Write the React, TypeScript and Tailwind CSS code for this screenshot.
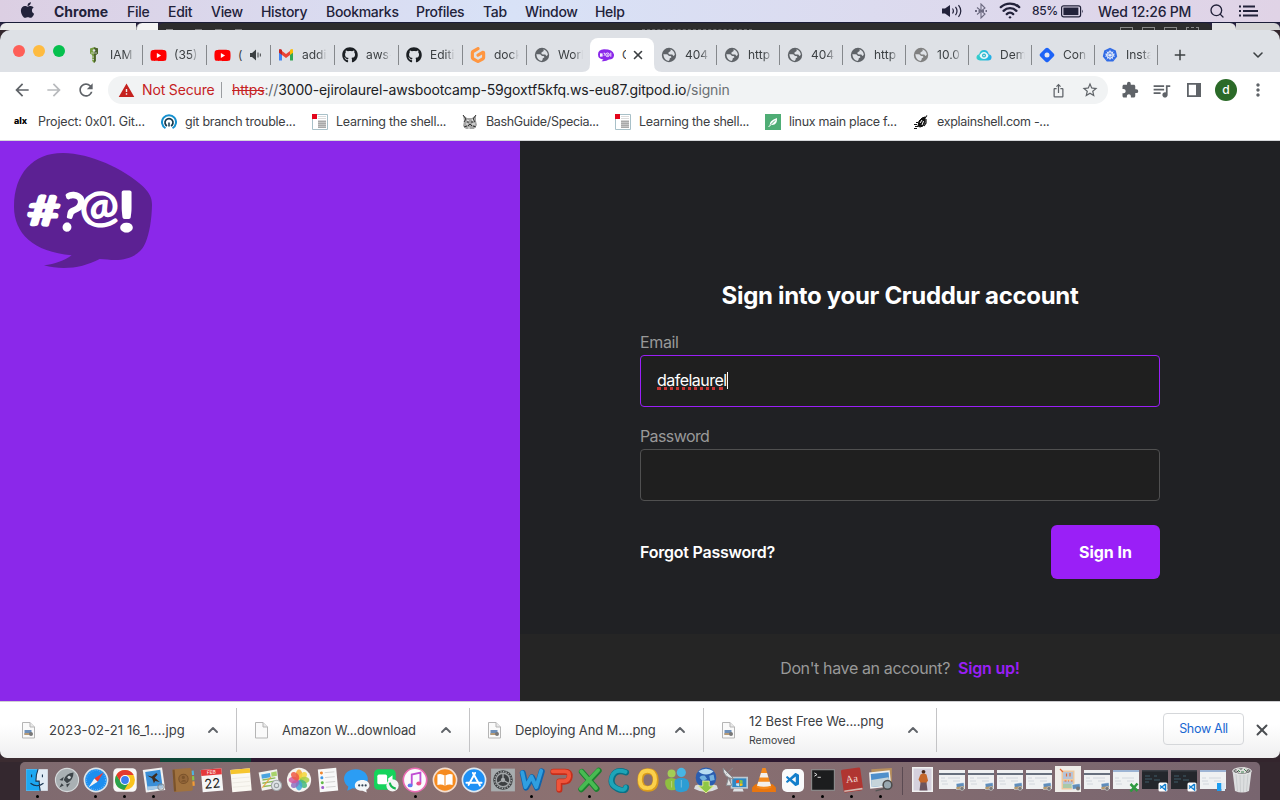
import React from 'react';
import { FaApple, FaGithub, FaYoutube } from 'react-icons/fa';
import { SiGitpod } from 'react-icons/si';
import {
  MdAdd,
  MdArrowBack,
  MdArrowForward,
  MdExtension,
  MdIosShare,
  MdMoreVert,
  MdQueueMusic,
  MdRefresh,
  MdStarBorder,
  MdWarning,
} from 'react-icons/md';
import { VscVscode } from 'react-icons/vsc';
import { ChevronDown, ChevronUp, Search, Wifi, X } from 'lucide-react';

/* ---------- macOS menu bar ---------- */

const menus = [
  { label: 'File', cls: 'w-[41px]' },
  { label: 'Edit', cls: 'w-[43px]' },
  { label: 'View', cls: 'w-[50px]' },
  { label: 'History', cls: 'w-[65px]' },
  { label: 'Bookmarks', cls: 'w-[90px]' },
  { label: 'Profiles', cls: 'w-[67px]' },
  { label: 'Tab', cls: 'w-[42px]' },
  { label: 'Window', cls: 'w-[70px]' },
  { label: 'Help', cls: 'w-[40px]' },
];

function MenuBar() {
  return (
    <div className="flex h-[23px] items-center border-b border-[#1b1d38] bg-linear-to-r from-[#dccfe3] via-[#d8e2f7] via-40% to-[#e0d3e6] text-[14px] text-[#22223a]">
      <FaApple className="ml-[20px] h-[18px] w-[15px] -translate-y-px" />
      <span className="ml-[19px] w-[73px] font-bold tracking-[0px]">Chrome</span>
      {menus.map((m) => (
        <span key={m.label} className={`${m.cls} whitespace-nowrap font-medium tracking-[-0.3px]`}>
          {m.label}
        </span>
      ))}
      <div className="ml-auto flex items-center">
        <svg width="22" height="16" viewBox="0 0 22 16" fill="none" stroke="#22223a" strokeWidth="1.2">
          <path d="M1 5.500h3L9 2v12l-5-3.500H1z" fill="#22223a" stroke="none" />
          <path d="M11.500 5.500q1.800 2.500 0 5M14.500 3.800q3 4.200 0 8.400M17.500 2.200q4.600 5.800 0 11.600" />
        </svg>
        <span className="ml-[12px] flex w-[12px] justify-center opacity-60">
          <svg width="12" height="16" viewBox="0 0 12 16" fill="none" stroke="#22223a" strokeWidth="1.100">
            <path d="M2 4.500l8 6.500L6 15V1l4 4-8 6.500" />
            <path d="M0 8h12" strokeWidth="2" strokeDasharray="2 1.500" />
          </svg>
        </span>
        <Wifi className="ml-[12px] h-[22px] w-[22px] -translate-y-px" strokeWidth={2.6} />
        <span className="ml-[11px] w-[29px] text-[12px] font-medium tracking-[-0.3px]">85%</span>
        <svg width="23" height="13" viewBox="0 0 23 13">
          <rect x=".6" y=".8" width="19" height="11" rx="2" fill="none" stroke="#22223a" strokeWidth="1.200" />
          <rect x="2.400" y="2.500" width="15" height="7.600" fill="#22223a" />
          <path d="M21.200 4.500q1.600 1.800 0 3.700z" fill="#22223a" />
        </svg>
        <span className="ml-[14px] w-[94px] whitespace-nowrap font-medium tracking-[-0.2px]">Wed 12:26 PM</span>
        <Search className="ml-[17px] h-[16px] w-[16px]" strokeWidth={2} />
        <svg className="mr-[22px] ml-[14px]" width="19" height="12" viewBox="0 0 19 12" fill="#22223a">
          <path d="M0 .5h2v2H0zM4 .5h12v2H4zM0 5h2v2H0zM4 5h15v2H4zM0 9.500h2v2H0zM4 9.500h15v2H4z" />
        </svg>
      </div>
    </div>
  );
}

function BackgroundWindows() {
  return (
    <div className="flex h-[7px] overflow-hidden bg-[#2b2440]">
      <div className="w-[136px] rounded-tl-md bg-[#e9e9e9]" />
      <div className="w-[22px] rounded-tl-md border-l border-[#aaa] bg-[#f4f4f4]" />
      <div className="flex flex-1 items-end rounded-t-md bg-[#2d2d2d]">
        <div className="ml-[8px] h-px w-[7px] bg-[#888]" />
        <div className="ml-[22px] h-px w-[7px] bg-[#777]" />
        <div className="ml-[13px] h-px w-[7px] bg-[#777]" />
        <div className="ml-[13px] h-px w-[7px] bg-[#777]" />
        <div className="ml-[400px] h-px w-[110px] border-b border-dashed border-[#666]" />
        <div className="mr-[13px] ml-auto flex gap-[9px]">
          <span className="h-[3px] w-[13px] border border-b-0 border-[#888]" />
          <span className="h-[3px] w-[13px] border border-b-0 border-[#888]" />
          <span className="h-[3px] w-[13px] border border-b-0 border-[#888]" />
          <span className="h-[3px] w-[13px] border border-b-0 border-dashed border-[#888]" />
        </div>
      </div>
      <div className="w-[24px] rounded-tr-md bg-[#e4e4e4]" />
      <div className="w-[44px] rounded-tr-md bg-[#d5d5d5]" />
    </div>
  );
}

/* ---------- browser tabs ---------- */

const Globe = ({ fill = '#5f6368' }: { fill?: string }) => (
  <svg width="16" height="16" viewBox="0 0 16 16">
    <circle cx="8" cy="8" r="7.200" fill={fill} />
    <path
      d="M2.300 7.300H5.500q2 0 2.300 1.700H9.500q1 .2.800 1.500l-1.500.7q0 2-1.300 2.800Q3 13.300 2.300 7.300z"
      fill="#dee1e6"
    />
    <path d="M9.500 2.300Q13.600 3.700 13.800 8l-1.500 1-1-1.500H8.500L7 6l1.500-1.300 1.200-.7z" fill="#dee1e6" />
  </svg>
);

const YouTube = () => (
  <span className="flex h-4 w-4 items-center justify-center bg-radial from-white from-30% to-transparent to-31%">
    <FaYoutube className="h-[17px] w-[17px] shrink-0 text-[#f00]" />
  </span>
);

const IamKey = () => (
  <svg width="16" height="16" viewBox="0 0 16 16">
    <path d="M4 1.500L8 .3l4 1.200v5L9.800 8v6L8 16l-1.800-2V8L4 6.500z" fill="#759c3e" />
    <path d="M8 .3l4 1.200v5L9.800 8v6L8 16z" fill="#4b612c" />
    <circle cx="8" cy="3.500" r="1.300" fill="#dee1e6" />
    <path d="M5 6h6M6.200 10H8M6.200 12.500H8" stroke="#dee1e6" strokeWidth=".7" />
  </svg>
);

const Gmail = () => (
  <svg width="16" height="16" viewBox="0 0 16 16">
    <path d="M1 3.500v10h3V7z" fill="#4285f4" />
    <path d="M15 3.500v10h-3V7z" fill="#34a853" />
    <path d="M4 4v4l4 3 4-3V4L8 7z" fill="#ea4335" />
    <path d="M1 3.500q0-2.200 2.400-.9L4 3v5L1 5.700z" fill="#c5221f" />
    <path d="M15 3.500q0-2.200-2.400-.9L12 3v5l3-2.300z" fill="#fbbc04" />
  </svg>
);

const Bubble = () => (
  <svg width="16" height="16" viewBox="0 0 16 16">
    <path d="M0 7.500Q0 2.500 6 2.200q9 0 10 5.300 .3 5-5 5Q8 14.800 3.500 14.200l2-1.700Q0 12 0 7.500z" fill="#8b28ea" />
    <path d="M2 7.300h2.500M2 8.700h2.500M2.700 6.200v3.600M3.900 6.200v3.600M5.600 6.200q2-.5 1.200 1.400L6 8.700M12.800 5.700v4" stroke="#fff" strokeWidth=".9" fill="none" />
    <circle cx="9.500" cy="7.800" r="1.800" fill="none" stroke="#fff" strokeWidth=".9" />
    <circle cx="9.700" cy="8" r=".7" fill="#fff" />
  </svg>
);

const CloudDemo = () => (
  <svg width="16" height="16" viewBox="0 0 16 16">
    <defs>
      <linearGradient id="teal">
        <stop stopColor="#35cfc9" />
        <stop offset="1" stopColor="#22aee8" />
      </linearGradient>
    </defs>
    <path d="M4 13.500Q0 13 .5 9.800 1 7.500 3.200 7.300 4 3 8 3t4.800 4.300Q16 8 15.500 11q-.5 2.500-3.500 2.500z" fill="url(#teal)" />
    <path d="M3.500 8.800Q5 5 8 5t4.500 3.800Q11 12 8 12T3.500 8.800z" fill="#e8f7fa" />
    <circle cx="8" cy="8.600" r="2" fill="#29b5c8" />
    <circle cx="8" cy="8.600" r=".8" fill="#e8f7fa" />
  </svg>
);

const Diamond = () => (
  <svg width="16" height="16" viewBox="0 0 16 16">
    <rect x="2.300" y="2.300" width="11.400" height="11.400" rx="2" fill="#1d63f7" transform="rotate(45 8 8)" />
    <circle cx="8" cy="8" r="2.500" fill="#e4e8f2" />
  </svg>
);

const Kube = () => (
  <svg width="16" height="16" viewBox="0 0 16 16">
    <path d="M8 .8l5.800 2.700 1.400 6.100-4 5H4.800l-4-5 1.400-6.100z" fill="#326ce5" />
    <circle cx="8" cy="8" r="3.300" fill="none" stroke="#fff" />
    <path d="M8 2.800V13M3 7l10 2.300M3 9.300L13 7M4.800 4.300l6.400 8M11.200 4.300l-6.400 8" stroke="#fff" strokeWidth=".6" />
  </svg>
);

type TabInfo = { title: string; icon: React.ReactNode; audio?: boolean };

const leftTabs: TabInfo[] = [
  { title: 'IAM', icon: <IamKey /> },
  { title: '(35)', icon: <YouTube /> },
  { title: '(', icon: <YouTube />, audio: true },
  { title: 'addi', icon: <Gmail /> },
  { title: 'aws-', icon: <FaGithub className="h-4 w-4 text-[#1b1f23]" /> },
  { title: 'Editi', icon: <FaGithub className="h-4 w-4 text-[#1b1f23]" /> },
  { title: 'dock', icon: <SiGitpod className="h-4 w-4 text-[#ff9640]" /> },
  { title: 'Worl', icon: <Globe /> },
];

const rightTabs: TabInfo[] = [
  { title: '404', icon: <Globe /> },
  { title: 'http', icon: <Globe /> },
  { title: '404', icon: <Globe /> },
  { title: 'http', icon: <Globe /> },
  { title: '10.0', icon: <Globe fill="#808080" /> },
  { title: 'Dem', icon: <CloudDemo /> },
  { title: 'Con', icon: <Diamond /> },
  { title: 'Insta', icon: <Kube /> },
];

function Tab({ tab, width, last }: { tab: TabInfo; width: string; last?: boolean }) {
  return (
    <div className={`${width} flex shrink-0 items-center pl-[7px]`}>
      <span className="flex w-4 shrink-0 justify-center">{tab.icon}</span>
      <span
        className={`${tab.audio ? 'w-[8px]' : 'w-[25px] mask-r-from-62% mask-r-to-100%'} ml-2 shrink-0 overflow-hidden text-[12px] whitespace-nowrap text-[#3c4043]`}
      >
        {tab.title}
      </span>
      {tab.audio && (
        <svg className="ml-[4px] shrink-0" width="12" height="12" viewBox="0 0 12 12">
          <path d="M0 4h2l4-3.500v11L2 8H0z" fill="#3c4043" />
          <path d="M8 3.500v5M10.300 4.500v3" stroke="#3c4043" strokeWidth="1" />
        </svg>
      )}
      {!last && <span className="ml-auto h-[20px] w-px shrink-0 bg-[#85888c]" />}
    </div>
  );
}

function TabStrip() {
  return (
    <div className="flex h-[42px] rounded-t-[10px] bg-[#dee1e6]">
      <div className="flex w-[79px] shrink-0 gap-2 pt-[15px] pl-[13px]">
        <span className="h-3 w-3 rounded-full bg-[#fe5f58]" />
        <span className="h-3 w-3 rounded-full bg-[#febb40]" />
        <span className="h-3 w-3 rounded-full bg-[#05c04e]" />
      </div>
      <div className="mt-2 flex h-[34px] w-[511px] shrink-0">
        {leftTabs.map((t, i) => (
          <Tab key={i} tab={t} width="w-[64px]" last={i === 7} />
        ))}
      </div>
      <div className="relative mt-2 flex h-[34px] w-16 shrink-0 items-center rounded-t-lg bg-white pl-2">
        <svg className="absolute bottom-0 -left-2" width="8" height="8">
          <path d="M8 0v8H0q8 0 8-8z" fill="#fff" />
        </svg>
        <svg className="absolute -right-2 bottom-0" width="8" height="8">
          <path d="M0 0v8h8Q0 8 0 0z" fill="#fff" />
        </svg>
        <Bubble />
        <span className="ml-2 w-[4px] overflow-hidden text-[12px] text-[#3c4043]">C</span>
        <X className="ml-[5px] h-[14px] w-[14px] text-[#3c4043]" strokeWidth={2.8} />
      </div>
      <div className="mt-2 flex h-[34px] w-[504px] shrink-0">
        {rightTabs.map((t, i) => (
          <Tab key={i} tab={t} width="w-[63px]" />
        ))}
      </div>
      <div className="mt-2 flex h-[34px] flex-1 items-center justify-between pr-[14px] pl-[13px] text-[#3c4043]">
        <MdAdd className="h-[18px] w-[18px]" />
        <ChevronDown className="h-4 w-4" strokeWidth={2.4} />
      </div>
    </div>
  );
}

/* ---------- toolbar ---------- */

function Toolbar() {
  return (
    <div className="flex h-9 items-center bg-white text-[#5f6368]">
      <MdArrowBack className="ml-3 h-5 w-5" />
      <MdArrowForward className="ml-3 h-5 w-5 text-[#b8babd]" />
      <MdRefresh className="ml-3 h-5 w-5" />
      <div className="ml-3 flex h-7 w-[1000px] items-center rounded-full bg-[#f1f3f4] text-[14px] whitespace-nowrap">
        <MdWarning className="ml-[10px] h-[17px] w-[17px] text-[#c5221f]" />
        <span className="ml-[7px] w-[79px] -translate-y-px tracking-[-0.15px] text-[#c5221f]">Not Secure</span>
        <span className="h-4 w-px bg-[#9a9da1]" />
        <span className="ml-[10px] -translate-y-px tracking-[-0.13px] text-[#202124]">
          <span className="text-[#c5221f] line-through">https</span>
          <span className="text-[#5f6368]">://</span>3000-ejirolaurel-awsbootcamp-59goxtf5kfq.ws-eu87.gitpod.io
          <span className="text-[#6b6f73]">/signin</span>
        </span>
        <MdIosShare className="ml-auto h-[15px] w-[15px]" />
        <MdStarBorder className="mr-[9px] ml-[15px] h-[18px] w-[18px]" />
      </div>
      <MdExtension className="ml-[13px] h-[18px] w-[18px]" />
      <MdQueueMusic className="ml-[12px] h-[21px] w-[21px]" />
      <svg className="ml-[15px]" width="14" height="14" viewBox="0 0 14 14">
        <path d="M0 0h14v14H0zM1.800 1.800v10.400H9V1.800z" fill="#5f6368" fillRule="evenodd" />
      </svg>
      <span className="ml-[14px] flex h-[22px] w-[22px] items-center justify-center rounded-full bg-[#2b6a28] text-[12px] font-medium text-white">
        d
      </span>
      <MdMoreVert className="ml-[11px] h-5 w-5" />
    </div>
  );
}

const DocIcon = () => (
  <svg width="16" height="16" viewBox="0 0 16 16">
    <path d="M.5.500h15v15H.5z" fill="#fff" stroke="#a8c0c8" />
    <path d="M0 0h5v5H0z" fill="#e3061b" />
    <path d="M6 2.500h8M6 4.500h8" stroke="#ccc" strokeWidth=".7" />
    <path d="M6 6.500h8v7.500H6z" fill="#a9a9a9" />
    <path d="M6 8.500h8M6 10.500h8M6 12.500h8" stroke="#d8d8d8" strokeWidth=".6" />
  </svg>
);

const bookmarks: { label: string; icon: React.ReactNode; width: string }[] = [
  {
    label: 'Project: 0x01. Git...',
    width: 'w-[107px] tracking-[-0.18px]',
    icon: <span className="-mt-[2px] w-4 text-[9px] font-extrabold tracking-[0px] text-black">alx</span>,
  },
  {
    label: 'git branch trouble...',
    width: 'w-[111px] tracking-[-0.23px]',
    icon: (
      <svg width="16" height="16" viewBox="0 0 16 16" fill="none">
        <path d="M4.500 14.200A7 7 0 1 1 11.500 14.200" stroke="#1590cf" strokeWidth="2" />
        <path d="M6 12A4 4 0 1 1 10 12" stroke="#173a4d" strokeWidth="1.700" />
        <path d="M8 8.500v4" stroke="#173a4d" strokeWidth="1.500" />
      </svg>
    ),
  },
  { label: 'Learning the shell...', width: 'w-[110px] tracking-[-0.27px]', icon: <DocIcon /> },
  {
    label: 'BashGuide/Specia...',
    width: 'w-[113px] tracking-[-0.34px]',
    icon: (
      <svg width="16" height="16" viewBox="0 0 16 16">
        <path d="M1 1l4 3h5l4-3v6l1 4-3 4H4L1 12l1-5z" fill="#a4a4a4" />
        <path d="M1 1l3 4-2 3M14 1l-3 4 2 3M5 8h2M9 8h2M6 12l2-2 2 2M2 13l3-1M14 13l-3-1" stroke="#333" fill="none" />
        <path d="M5 6l2 1M10 5l1 2M4 10h2M10 10h3M7 13v2" stroke="#f2f2f2" />
      </svg>
    ),
  },
  { label: 'Learning the shell...', width: 'w-[110px] tracking-[-0.27px]', icon: <DocIcon /> },
  {
    label: 'linux main place f...',
    width: 'w-[108px] tracking-[-0.27px]',
    icon: (
      <svg width="16" height="16" viewBox="0 0 16 16">
        <path d="M0 0h16v16H0z" fill="#4fad75" />
        <path d="M4.500 12Q4 6.500 12 4q.5 7.500-5.500 7z" fill="#fff" />
        <path d="M3.500 13L10 6.500" stroke="#4fad75" />
        <path d="M3.500 13L6 10.500" stroke="#fff" />
      </svg>
    ),
  },
  {
    label: 'explainshell.com -...',
    width: 'w-[113px] tracking-[-0.3px]',
    icon: (
      <svg width="16" height="16" viewBox="0 0 16 16" fill="none" stroke="#111">
        <path d="M1 14.500h3M2 12.500h3M1 10.500h3M3 8.500h2" strokeWidth="1.200" />
        <path d="M5 12l1-5 3-3 3-1v5l-2 4-3 1z" fill="#111" />
        <path d="M12 4l2-2.500M11 12l2-3V5" strokeWidth="1.200" />
        <path d="M7 9l2-3M9 11l1.500-4" stroke="#fff" />
      </svg>
    ),
  },
];

function BookmarkBar() {
  return (
    <div className="flex h-[33px] items-center gap-4 border-b border-[#d5d7da] bg-white pb-[4px] pl-[14px]">
      {bookmarks.map((b, i) => (
        <div key={i} className="flex shrink-0 items-center gap-2">
          {b.icon}
          <span className={`${b.width} text-[12.5px] whitespace-nowrap text-[#3c4043]`}>{b.label}</span>
        </div>
      ))}
    </div>
  );
}

/* ---------- sign-in page ---------- */

function Logo() {
  return (
    <svg width="200" height="139" viewBox="0 3 600 417">
      <path
        d="M42 200C42 100 100 38 190 39C270 40 370 85 430 140C450 160 456 175 456 195C455 240 448 280 437 307C422 345 385 360 345 360C330 360 315 358 299 357C250 383 190 392 132 376C165 373 192 362 215 346C100 335 42 280 42 200Z"
        fill="#5c2193"
      />
      <g fill="#fff" stroke="#fff" strokeLinejoin="round" fontFamily="Lato, sans-serif" fontWeight="400">
        <text x="83" y="255" fontSize="122" strokeWidth="9" textLength="96" lengthAdjust="spacingAndGlyphs" transform="rotate(2 130 210)">#</text>
        <text x="183" y="271" fontSize="156" strokeWidth="8" textLength="66" lengthAdjust="spacingAndGlyphs" transform="rotate(14 212 215)">?</text>
        <text x="240" y="245" fontSize="130" strokeWidth="5" textLength="118" lengthAdjust="spacingAndGlyphs" transform="rotate(-10 300 210)">@</text>
        <text x="352" y="272" fontSize="162" strokeWidth="9" textLength="56" lengthAdjust="spacingAndGlyphs">!</text>
      </g>
    </svg>
  );
}

function SignIn() {
  return (
    <div className="flex h-[560px]">
      <div className="w-[520px] bg-[#8b28ea]">
        <Logo />
      </div>
      <div className="flex flex-1 flex-col bg-[#202124] text-[16px]">
        <form className="flex h-[493px] flex-col px-[120px] pt-[137px]">
          <h1 className="mb-[20px] text-center text-[24px] leading-[36px] font-bold tracking-[-0.31px] text-white">
            Sign into your Cruddur account
          </h1>
          <label className="h-[21px] leading-[17px] tracking-[-0.35px] text-[#999]">Email</label>
          <div className="flex h-[52px] items-center rounded-[4px] border border-[#9a1ff7] bg-[#1f1f1f] pb-px pl-4 text-white">
            <span className="relative h-[17px] border-r border-white leading-[17px] tracking-[-0.53px]">
              dafelaurel
              <span className="absolute right-1 -bottom-px left-0 border-b-[3px] border-dotted border-[#c93434]" />
            </span>
          </div>
          <label className="mt-[21px] h-[21px] leading-[17px] tracking-[-0.6px] text-[#999]">Password</label>
          <div className="h-[52px] rounded-[4px] border border-[#505050] bg-[#1f1f1f]" />
          <div className="mt-[24px] flex items-center justify-between font-semibold text-white">
            <a className="tracking-[-0.22px]">Forgot Password?</a>
            <button type="button" className="h-[54px] w-[109px] rounded-md bg-[#9a1ff7] pb-px font-bold tracking-[0px]">
              Sign In
            </button>
          </div>
        </form>
        <div className="flex flex-1 items-center justify-center gap-2 bg-[#252525] text-[#999]">
          <span className="tracking-[-0.37px]">Don't have an account?</span>
          <a className="font-semibold tracking-[-0.2px] text-[#9a1ff7]">Sign up!</a>
        </div>
      </div>
    </div>
  );
}

/* ---------- downloads ---------- */

const FileIcon = ({ image }: { image?: boolean }) => (
  <svg width="13" height="17" viewBox="0 0 13 17">
    <path d="M.5.500h7.500l4.500 4.500v11H.5z" fill="#fafafa" stroke="#b5b5b5" />
    <path d="M8 .5V5h4.500" fill="#e9e9e9" stroke="#b5b5b5" />
    {image && (
      <>
        <path d="M2.500 8h7v5h-7z" fill="#6d8fb8" />
        <path d="M2.500 11h7v2h-7z" fill="#b59a76" />
        <circle cx="9" cy="12" r="2" fill="#777" />
      </>
    )}
  </svg>
);

const downloads = [
  { name: '2023-02-21 16_1....jpg', image: true, note: '', pad: 'pl-[22px]', width: 'w-[237px]', track: 'tracking-[0.12px]' },
  { name: 'Amazon W...download', image: false, note: '', pad: 'pl-[18px]', width: 'w-[233px]', track: 'tracking-[-0.15px]' },
  { name: 'Deploying And M....png', image: true, note: '', pad: 'pl-[18px]', width: 'w-[234px]', track: 'tracking-[-0.15px]' },
  { name: '12 Best Free We....png', image: true, note: 'Removed', pad: 'pl-[18px]', width: 'w-[233px]', track: 'tracking-[-0.1px]' },
];

function DownloadBar() {
  return (
    <div className="flex h-[57px] items-center rounded-b-[7px] border-t border-[#cfcfd2] bg-linear-to-b from-white via-white via-40% to-[#efeff0] text-[#3c4043]">
      {downloads.map((d) => (
        <div key={d.name} className={`${d.width} ${d.pad} flex h-[44px] shrink-0 items-center border-r border-[#c4c4c6] pr-[15px]`}>
          <FileIcon image={d.image} />
          <div className="ml-[14px] flex flex-col whitespace-nowrap">
            <span className={`${d.track} text-[13px] leading-[18px]`}>{d.name}</span>
            {d.note && <span className="mt-[3px] text-[10.5px] leading-[16px]">{d.note}</span>}
          </div>
          <ChevronUp className="ml-auto h-[16px] w-[16px] text-[#5f6368]" strokeWidth={2.8} />
        </div>
      ))}
      <button className="mr-[9px] ml-auto h-8 w-[81px] -translate-y-px rounded-[4px] border border-[#d5d7da] text-[12.5px] tracking-[-0.3px] text-[#1967d2]">
        Show All
      </button>
      <X className="mr-[9px] h-[18px] w-[18px] text-[#4a4d51]" strokeWidth={2.6} />
    </div>
  );
}

/* ---------- dock ---------- */

const Cell = ({ children }: { children: React.ReactNode }) => (
  <svg width="26" height="26" viewBox="0 0 24 24">
    {children}
  </svg>
);

const BarLetter = ({ d, light, dark }: { d: string; light: string; dark: string }) => (
  <Cell>
    <path d={d} fill="none" stroke={dark} strokeWidth="5.600" strokeLinecap="round" strokeLinejoin="round" />
    <path d={d} fill="none" stroke={light} strokeWidth="3.600" strokeLinecap="round" strokeLinejoin="round" transform="translate(-.5 -.5)" />
  </Cell>
);

const WindowThumb = ({ dark, badge }: { dark?: boolean; badge: 'preview' | 'code' | 'excel' | 'finder' }) => (
  <svg width="28" height="24" viewBox="0 0 28 24">
    <path d="M1 2h26v19H1z" fill={dark ? '#24272c' : '#eff1f2'} />
    {dark ? (
      <path d="M1 2h26v1.500H1z" fill="#3b3e45" />
    ) : (
      <path d={badge === 'preview' ? 'M1 5h26v2H1z' : 'M1 2h26v2H1z'} fill={badge === 'preview' ? '#666f7d' : '#9db4d4'} />
    )}
    {dark ? (
      <path d="M4 8h5M4 11h7M4 14h4M13 8h3M13 12h6" stroke="#3f5c68" />
    ) : (
      <path d="M3 10h4M10 10h12M3 13h6M15 13h7M4 16h6" stroke="#ccd2d8" strokeWidth=".8" />
    )}
    {badge === 'preview' && (
      <>
        <path d="M18 15.500l8-1 .5 6-8 1z" fill="#5f8dbb" stroke="#fff" strokeWidth=".6" />
        <path d="M18.500 19l7.500-1v2.500l-7.500 1z" fill="#b89a6b" />
        <circle cx="24" cy="20.500" r="2" fill="#777" stroke="#ccc" strokeWidth=".6" />
      </>
    )}
    {badge === 'code' && (
      <>
        <rect x="17.500" y="14.500" width="9" height="9" rx="1.500" fill="#fff" />
        <path d="M24.500 16v6l-5.500-4.500M24.500 16L19 20.500" stroke="#1480d0" strokeWidth="1.500" fill="none" />
      </>
    )}
    {badge === 'excel' && <path d="M18.500 16l7 7M25.500 15.500l-7 8" stroke="#2e9a40" strokeWidth="2.500" />}
    {badge === 'finder' && (
      <>
        <path d="M18 15h4.500v8H18z" fill="#1c9df0" />
        <path d="M22.500 15H26v8h-3.500z" fill="#dcebf7" />
      </>
    )}
  </svg>
);

const petals = ['#f7a531', '#f3d53b', '#a8cf45', '#45b97c', '#3fa7d6', '#8f6fc1', '#d1579b', '#ee5a45'];

const apps: { icon: React.ReactNode; open?: boolean }[] = [
  {
    open: true,
    icon: (
      <Cell>
        <path d="M2 2h20v20H2z" fill="#e2ecf5" />
        <path d="M2 2h11q-2 5-2 11h3q0 5 1 9H2z" fill="#1ca8f2" />
        <path d="M7 7v2.500M17 7v2.500M6 15q6 4.500 12 0M13 2q-2 5-2 11h3q0 5 1 9" stroke="#17334f" fill="none" />
      </Cell>
    ),
  },
  {
    icon: (
      <Cell>
        <circle cx="12" cy="12" r="10.700" fill="#a9b0b3" stroke="#d8dcde" />
        <path d="M18 5q-7 .5-9 7l3 3q6-3 6-10zM9 9l-4 3 3 .7zM15 15l-3 4-.7-3zM7 15l-2 4 4-2z" fill="#3d4448" />
        <circle cx="14" cy="9.500" r="1.500" fill="#c7cdd0" />
      </Cell>
    ),
  },
  {
    open: true,
    icon: (
      <Cell>
        <circle cx="12" cy="12" r="10.700" fill="#1c8ff0" stroke="#dfe6ea" strokeWidth="1.500" />
        <circle cx="12" cy="12" r="8.800" fill="none" stroke="#79bdf5" strokeDasharray=".6 1.400" />
        <path d="M19 5l-5.500 8.500-3-3z" fill="#f23b30" />
        <path d="M5 19l5.500-8.500 3 3z" fill="#f4f4f4" />
      </Cell>
    ),
  },
  {
    open: true,
    icon: (
      <Cell>
        <rect x="1.200" y="1.200" width="21.600" height="21.600" rx="4" fill="#f8f8f8" />
        <circle cx="12" cy="12" r="9.200" fill="#f9c31d" />
        <path d="M4 7.400A9.200 9.200 0 0 1 20 7.400H12z" fill="#e33b2e" />
        <path d="M4 7.400A9.200 9.200 0 0 0 11.300 21.200L15.700 14H8.300z" fill="#2aa24c" />
        <path d="M4 7.400L8.300 14 12 7.400z" fill="#e33b2e" />
        <circle cx="12" cy="12" r="4.600" fill="#fff" />
        <circle cx="12" cy="12" r="3.600" fill="#3d7ef0" />
      </Cell>
    ),
  },
  {
    open: true,
    icon: (
      <Cell>
        <g transform="rotate(-8 12 12)">
          <path d="M3 1.500h18v21H3z" fill="#f1f1f1" />
          <path d="M5 3.500h14v17H5z" fill="#3a8fd8" />
          <path d="M6.500 7l4 1.500L15 6l1 1.500-3 2.500 4 4.500-4-1.500-1.500 2-1-4.500z" fill="#3d2b1e" />
          <path d="M5 17l14 1v2.500H5z" fill="#a5c9e6" />
        </g>
        <circle cx="18.500" cy="18.500" r="3" fill="#b9c2c8" fillOpacity=".4" stroke="#777" strokeWidth=".7" />
      </Cell>
    ),
  },
  {
    icon: (
      <Cell>
        <g transform="rotate(-4 12 12)">
          <path d="M20 4h2.500v4H20z" fill="#4fb4e2" />
          <path d="M20 9h2.500v4H20z" fill="#8ac54b" />
          <path d="M20 14h2.500v4H20z" fill="#f29c38" />
          <rect x="3" y="1.500" width="17.500" height="21" rx="1.500" fill="#a0723f" />
          <path d="M3 2h2v20H3z" fill="#7b532b" />
          <circle cx="12.500" cy="11" r="4.300" fill="#94673a" stroke="#7b532b" />
          <circle cx="12.500" cy="9.600" r="1.500" fill="#7b532b" />
          <path d="M9.800 13.500q2.700-3 5.400 0" fill="#7b532b" />
        </g>
      </Cell>
    ),
  },
  {
    icon: (
      <Cell>
        <g transform="rotate(-5 12 12)">
          <path d="M2.500 2h19v20.500h-19z" fill="#f6f6f6" />
          <path d="M2.500 2h19v5.500h-19z" fill="#e5383b" />
          <text x="12" y="6.400" fontSize="4.500" fill="#fff" textAnchor="middle" fontFamily="Inter, sans-serif">FEB</text>
          <text x="12" y="19.500" fontSize="12" fill="#222" textAnchor="middle" fontFamily="Inter, sans-serif">22</text>
        </g>
      </Cell>
    ),
  },
  {
    icon: (
      <Cell>
        <g transform="rotate(-5 12 12)">
          <path d="M3 2h18v20.500H3z" fill="#faf8f2" />
          <path d="M3 2h18v4H3z" fill="#f6c52d" />
          <path d="M4 10h16M4 14h16M4 18h16" stroke="#dedad0" strokeWidth=".4" />
        </g>
      </Cell>
    ),
  },
  {
    icon: (
      <Cell>
        <path d="M1.500 5l17-3 2 17-16 3z" fill="#f1f1ee" />
        <path d="M4 7l8-1.500.5 4-8 1.300z" fill="#4aa3df" />
        <path d="M5 12l12-2M5 15l11-2M6 18l8-1" stroke="#8bb95a" strokeWidth="1.300" />
        <path d="M13 5l5-1 .5 4-5 1z" fill="#a8d36b" />
        <path d="M5 19l8-10" stroke="#eaa53a" />
        <circle cx="18" cy="17" r="4.700" fill="#dfe3e6" stroke="#a1a6aa" />
        <circle cx="18" cy="17" r="2" fill="none" stroke="#9aa0a4" />
      </Cell>
    ),
  },
  {
    icon: (
      <Cell>
        <circle cx="12" cy="12" r="11.200" fill="#f5f3f0" />
        {petals.map((c, i) => (
          <ellipse key={c} cx="12" cy="7" rx="3" ry="4.600" fill={c} fillOpacity=".85" transform={`rotate(${i * 45} 12 12)`} />
        ))}
      </Cell>
    ),
  },
  {
    icon: (
      <Cell>
        <g transform="rotate(-5 12 12)">
          <path d="M3.500 1.500h17v21h-17z" fill="#f8f8f8" />
          <path d="M9.500 5h9M9.500 9.500h9M9.500 14h9M9.500 18.500h9" stroke="#c8c8c8" strokeWidth=".7" />
          <circle cx="6.500" cy="5" r="1.400" fill="#f0872f" />
          <circle cx="6.500" cy="9.500" r="1.400" fill="#3e98e8" />
          <circle cx="6.500" cy="14" r="1.400" fill="#62b946" />
          <circle cx="6.500" cy="18.500" r="1.400" fill="#a060c8" />
        </g>
      </Cell>
    ),
  },
  {
    icon: (
      <Cell>
        <path d="M11 2C4 2 0 6 0 11c0 3 2 5.500 4 7l-1 4 5-2.500C17 21 22 16 22 11S17 2 11 2z" fill="#2b9df4" />
        <path d="M17 12c-4 0-7 2-7 5s3 5 7 5l4 1.500-.5-2.500c2-1 3-2.500 3-4 0-3-3-5-6.500-5z" fill="#f4f6f8" />
        <circle cx="14" cy="17" r="1" fill="#345" />
        <circle cx="17" cy="17" r="1" fill="#345" />
        <circle cx="20" cy="17" r="1" fill="#345" />
      </Cell>
    ),
  },
  {
    icon: (
      <Cell>
        <rect x="1" y="2" width="20" height="19" rx="4" fill="#14d45b" />
        <rect x="4" y="7" width="9" height="9" rx="1.500" fill="#fff" />
        <path d="M14 10.500l4-3v8l-4-3z" fill="#fff" />
        <circle cx="18" cy="17" r="5.700" fill="#f3f5f4" />
        <path d="M15.500 14.500q.5 4.500 5.500 5.500" stroke="#16b84f" strokeWidth="2" fill="none" />
      </Cell>
    ),
  },
  {
    open: true,
    icon: (
      <Cell>
        <circle cx="12" cy="12" r="10.800" fill="#fbfbfd" stroke="#eb6bb4" strokeWidth="1.500" />
        <path d="M9 16.500V7l8-1.800v9.500" stroke="#c04fd4" strokeWidth="1.700" fill="none" />
        <ellipse cx="7.500" cy="17" rx="2.300" ry="1.800" fill="#607cf0" />
        <ellipse cx="15.500" cy="15.200" rx="2.300" ry="1.800" fill="#e8518d" />
      </Cell>
    ),
  },
  {
    icon: (
      <Cell>
        <circle cx="12" cy="12" r="10.700" fill="#f68b1f" stroke="#f4ded0" strokeWidth="1.500" />
        <path d="M12 8Q8 5.500 5 7v9.500q4-1 7 1 3-2 7-1V7q-3-1.500-7 1z" fill="#fff" />
        <path d="M12 8v9.500" stroke="#f68b1f" />
      </Cell>
    ),
  },
  {
    icon: (
      <Cell>
        <circle cx="12" cy="12" r="10.700" fill="#1d90f5" stroke="#e0e9f0" strokeWidth="1.500" />
        <path d="M13 5.500l-6 11M11 5.500l6.500 11.500M5 14.500h14" stroke="#fff" strokeWidth="1.800" strokeLinecap="round" />
      </Cell>
    ),
  },
  {
    icon: (
      <Cell>
        <path d="M1 1.500h22v21H1z" fill="#a8adaf" />
        <circle cx="12" cy="12" r="9" fill="#3d4042" />
        <circle cx="12" cy="12" r="6.300" fill="none" stroke="#a2a6a8" strokeWidth="1.300" />
        <circle cx="12" cy="12" r="7.700" fill="none" stroke="#a2a6a8" strokeWidth="1.300" strokeDasharray="1.200 1.200" />
        <path d="M12 12V6M12 12l5 3M12 12l-5 3" stroke="#a8acae" strokeWidth="1.200" />
        <circle cx="12" cy="12" r="2" fill="#a8acae" />
      </Cell>
    ),
  },
  { open: true, icon: <BarLetter d="M3.500 5.500L6.500 19l5.500-9.500L16.500 19 21 4" light="#2f9fe0" dark="#1164ab" /> },
  { icon: <BarLetter d="M5 4.500H16q4.500 0 4 4.500t-5 4.500H10.500V21" light="#f0543a" dark="#c52e1b" /> },
  { open: true, icon: <BarLetter d="M4.500 4.500L18 20M20 3.500L4 20.500" light="#48bb52" dark="#1c8030" /> },
  { icon: <BarLetter d="M18.500 5Q9 1.500 6 9T10.500 20t8-1" light="#1ea5b8" dark="#0a7085" /> },
  { icon: <BarLetter d="M12 4Q5 4 5 12t7 8 7-8-7-8z" light="#fbd04b" dark="#d99b1c" /> },
  {
    icon: (
      <Cell>
        <circle cx="7" cy="6" r="3.700" fill="#a3cd55" />
        <path d="M1.500 12Q7 8.500 12 12v8q-5 3-9 0-3-4-1.500-8z" fill="#8fbf3f" />
        <circle cx="16" cy="5" r="4.200" fill="#47b5e4" />
        <path d="M10 12q6-4 12 0 3 6-1 10-6 2.500-10 0-2-5-1-10z" fill="#2c9dd4" />
        <path d="M7 13v6M16 12v7" stroke="#fff" strokeOpacity=".3" />
      </Cell>
    ),
  },
  {
    icon: (
      <Cell>
        <path d="M2 17q10-4 20 0l1 3q-11 6-22 0z" fill="#d9dcde" />
        <circle cx="12" cy="10" r="9.500" fill="#2a5db0" />
        <path d="M5 4q7-5 14 0-3 3-7 3T5 4z" fill="#b9dcf2" />
        <path d="M6 10q1-3 5-2l2 3-4 2zM15 8l4-1 1 5-4 1z" fill="#74b3e0" />
        <path d="M9 13h6v4.500h4L12 24l-7-6.500h4z" fill="#8fc746" stroke="#eef29c" strokeWidth=".8" />
      </Cell>
    ),
  },
  {
    icon: (
      <Cell>
        <path d="M8 9h16v11H8z" fill="#bcc9d2" />
        <path d="M9.500 10.500h13v8h-13z" fill="#2d87c4" />
        <path d="M13 12.500l2.700-.7v2.700l-2.700.3z" fill="#f25022" />
        <path d="M16.300 11.800l2.700.7v2.400l-2.700-.4z" fill="#8bc53f" />
        <path d="M13 15.300l2.700-.3v2.700L13 17z" fill="#bfe3fa" />
        <path d="M16.300 15l2.700.3V17l-2.700.7z" fill="#ffc20e" />
        <path d="M10 22.500h10L19 20h-8z" fill="#dde2e5" />
        <path d="M1 1q0 9 10 10zM4 6l6-5M6 10l-2 7h5z" fill="#e0e2e3" stroke="#878c90" strokeWidth=".9" />
      </Cell>
    ),
  },
  {
    icon: (
      <Cell>
        <path d="M1 19l3-3h16l3 3v4H1z" fill="#e9760f" />
        <path d="M10.500 1h3L19 19q-7 3-14 0z" fill="#f58a1c" />
        <path d="M9.200 5.500h5.600l1.300 4.200H7.900zM6.700 13.500h10.600l1.200 3.700q-6.500 2-13 0z" fill="#f3f0ec" />
      </Cell>
    ),
  },
  {
    open: true,
    icon: (
      <span className="flex h-[23px] w-[22px] items-center justify-center rounded-[5px] bg-[#f9fafb] text-[#137ecb]">
        <VscVscode className="h-[16px] w-[16px]" />
      </span>
    ),
  },
  {
    open: true,
    icon: (
      <Cell>
        <path d="M1 2h22v20H1z" fill="#8c8c8c" />
        <path d="M2 3h20v18H2z" fill="#1c1d1e" />
        <path d="M4 5.500l2.500 1.500L4 8.500M7 9.500h3" stroke="#e0e0e0" strokeWidth=".9" fill="none" />
      </Cell>
    ),
  },
  {
    open: true,
    icon: (
      <Cell>
        <g transform="rotate(-8 12 12)">
          <rect x="3" y="1.500" width="18" height="21" rx="1.500" fill="#b03531" />
          <path d="M3.500 20.500h17V22h-17z" fill="#d3b8b0" />
          <text x="12" y="14" fontSize="9.500" fill="#f0dad6" textAnchor="middle" fontFamily="Liberation Serif, serif">Aa</text>
        </g>
      </Cell>
    ),
  },
  {
    open: true,
    icon: (
      <Cell>
        <path d="M3 2l19-1v16L4 19z" fill="#b8905c" />
        <path d="M1 5l19-2 1.500 15L2 20z" fill="#f1f1f1" />
        <path d="M2.500 6.500L19 4.800l1 11.700-16.500 2z" fill="#4f8fcb" />
        <path d="M3 12l16-2.500 1 7-16.500 2z" fill="#c6d4da" />
        <circle cx="18" cy="16.500" r="4" fill="#98a8b0" stroke="#4c4c4c" strokeWidth="1.500" />
        <path d="M15 20l-8 2" stroke="#555" strokeWidth="1.300" />
      </Cell>
    ),
  },
];

const Portrait = () => (
  <svg width="21" height="25" viewBox="0 0 21 25">
    <path d="M0 0h21v25H0z" fill="#f2f2f2" />
    <path d="M1.500 1.500h18v22h-18z" fill="#d5d0dd" />
    <circle cx="11.500" cy="4.800" r="1.900" fill="#4a2a1e" />
    <path d="M8.500 7.500q3-2 6 0l1.500 6-2 3H9l-2.500-4z" fill="#c4662a" />
    <path d="M8.500 15.500h6l1 8h-8z" fill="#6b5560" />
  </svg>
);

const Poster = () => (
  <svg width="26" height="27" viewBox="0 0 26 27">
    <path d="M0 0h26v26H0z" fill="#efede9" />
    <path d="M6.500 4.500h13v19h-13z" fill="#ecc9a0" />
    <path d="M8 6h10v7H8zM8 15h10v7H8z" fill="#b5c4d8" />
    <path d="M8 18h10v4H8z" fill="#a9c9a8" />
    <path d="M11.500 7.500v3M15 7v3.500M9.500 15h2M13 15h1M16 15h1.500M5 3l3 3" stroke="#e36a35" strokeWidth="1.200" />
    <path d="M17 18.500l8-1 .5 5-8 1z" fill="#5f8dbb" stroke="#fff" strokeWidth=".6" />
    <circle cx="23" cy="22.500" r="2" fill="#777" />
  </svg>
);

const Trash = () => (
  <svg width="20" height="26" viewBox="0 0 20 26">
    <path d="M.5 4h19L17 24q-7 3-14 0z" fill="#dcdedf" />
    <path d="M4 7l1.500 17M8 7l.5 18M12 7l-.5 18M16 7l-1.500 17" stroke="#c0c4c6" strokeWidth=".7" />
    <ellipse cx="10" cy="4" rx="9.300" ry="3.300" fill="#737776" stroke="#eee" />
    <path d="M3 4l3-3 3 2 3-3 3 2 2 2-4 2H6z" fill="#dededb" />
    <path d="M6 3l2 2M12 2l2 2M9 5h3" stroke="#3f8554" />
    <path d="M4.500 4l2 1M14 4.500l2-1" stroke="#444" />
  </svg>
);

const minimized: React.ReactNode[] = [
  <Portrait />,
  <WindowThumb badge="preview" />,
  <WindowThumb badge="preview" />,
  <WindowThumb badge="preview" />,
  <WindowThumb badge="preview" />,
  <Poster />,
  <WindowThumb badge="preview" />,
  <WindowThumb badge="excel" />,
  <WindowThumb dark badge="code" />,
  <WindowThumb dark badge="code" />,
  <WindowThumb badge="finder" />,
  <Trash />,
];

function Dock() {
  return (
    <div className="flex h-[38px] w-[1240px] rounded-t-[5px] bg-linear-to-r from-[#7f6a6f] via-[#8c7171] via-45% to-[#78656f] pl-[2.900px]">
      {apps.map((a, i) => (
        <div key={i} className="flex w-[29.080px] shrink-0 flex-col items-center pt-[5px]">
          <div className="flex h-[26px] items-center">{a.icon}</div>
          {a.open && <span className="mt-[2px] h-[3px] w-[3px] rounded-full bg-black" />}
        </div>
      ))}
      <div className="mt-[5px] ml-[6.700px] h-[28px] w-px bg-[#5b4a52]" />
      <div className="ml-[5px] flex">
        {minimized.map((m, i) => (
          <div key={i} className="flex h-[35px] w-[29.080px] shrink-0 items-center justify-center">
            {m}
          </div>
        ))}
      </div>
    </div>
  );
}

export default function App() {
  return (
    <div className="h-[800px] w-[1280px] overflow-hidden bg-[#34282f] font-['Inter',sans-serif]">
      <MenuBar />
      <BackgroundWindows />
      <TabStrip />
      <Toolbar />
      <BookmarkBar />
      <SignIn />
      <div className="bg-[#34282f]">
        <DownloadBar />
      </div>
      <div className="flex h-[4px] bg-[#2c1830]">
        <div className="w-[160px] bg-[#3b2c31]" />
        <div className="w-[91px] bg-[#0d4436]" />
        <div className="flex-1" />
        <div className="w-[100px] bg-[#33252d]" />
      </div>
      <div className="flex justify-center">
        <Dock />
      </div>
    </div>
  );
}
